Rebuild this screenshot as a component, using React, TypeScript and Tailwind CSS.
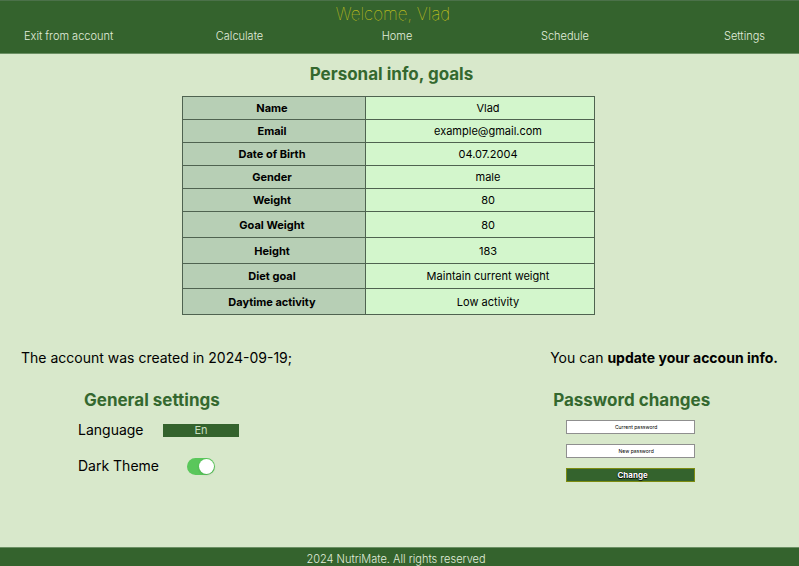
import { useState } from "react";

const navItems = ["Exit from account", "Calculate", "Home", "Schedule", "Settings"];

const profileRows = [
  { label: "Name", value: "Vlad", height: "h-[23px]" },
  { label: "Email", value: "example@gmail.com", height: "h-[23px]" },
  { label: "Date of Birth", value: "04.07.2004", height: "h-[23px]" },
  { label: "Gender", value: "male", height: "h-[23px]" },
  { label: "Weight", value: "80", height: "h-[23px]" },
  { label: "Goal Weight", value: "80", height: "h-[26px]" },
  { label: "Height", value: "183", height: "h-[26px]" },
  { label: "Diet goal", value: "Maintain current weight", height: "h-[25px]" },
  { label: "Daytime activity", value: "Low activity", height: "h-[26px]" },
];

function Header() {
  return (
    <header className="h-[54px] border-y border-t-[#4b7149] border-b-[#6b9064] bg-[#34632d]">
      <p className="pt-px pr-[13px] text-center text-[17px] leading-6 font-thin text-[#e0dc18]">
        Welcome, Vlad
      </p>
      <nav className="grid grid-cols-[137fr_157fr_158fr_178fr_111fr] pr-[34px] pl-6 text-center text-[11px] leading-5 font-light text-[#e2eedd]">
        {navItems.map((item) => (
          <a key={item} href="#" className="first:text-left last:text-right">
            {item}
          </a>
        ))}
      </nav>
    </header>
  );
}

function ProfileTable() {
  return (
    <table className="mx-auto w-[413px] table-fixed border-collapse bg-[#d3f6cc] text-[11px] leading-4 text-black">
      <tbody>
        {profileRows.map((row) => (
          <tr key={row.label} className={row.height}>
            <th
              scope="row"
              className="w-[183px] border border-[#4f6350] bg-[#b7cfb5] p-0 pr-1 text-center font-bold"
            >
              {row.label}
            </th>
            <td className="border border-[#4f6350] p-0 pl-4 text-center">{row.value}</td>
          </tr>
        ))}
      </tbody>
    </table>
  );
}

function GeneralSettings() {
  const [dark, setDark] = useState(true);
  return (
    <section className="pl-[57px]">
      <h2 className="pl-[6px] text-[17px] leading-6 font-bold text-[#34682f]">General settings</h2>
      <div className="mt-2 grid grid-cols-[85px_76px] items-center gap-y-4 text-[14px] leading-5">
        <label htmlFor="language">Language</label>
        <select
          id="language"
          className="h-[13px] w-full appearance-none bg-[#34632d] text-center text-[11px] leading-3 text-[#c9dfc0] [text-align-last:center]"
        >
          <option>En</option>
        </select>
        <label htmlFor="dark" className="whitespace-nowrap">
          Dark Theme
        </label>
        <input
          id="dark"
          type="checkbox"
          checked={dark}
          onChange={(e) => setDark(e.target.checked)}
          className="flex h-[17px] w-7 appearance-none items-center justify-self-center rounded-full bg-gray-400 p-px before:size-[15px] before:rounded-full before:bg-white before:shadow checked:justify-end checked:bg-[#5ac75b]"
        />
      </div>
    </section>
  );
}

function PasswordChanges() {
  return (
    <section className="pl-[3px]">
      <h2 className="text-[17px] leading-6 font-bold text-[#34682f]">Password changes</h2>
      <form className="mt-2 ml-[13px] flex w-[129px] flex-col gap-[10px]">
        <input
          type="password"
          aria-label="Current password"
          placeholder="Current password"
          className="h-[14px] border border-[#8f8f8f] bg-white pl-[11px] text-center text-[5px] placeholder:text-black"
        />
        <input
          type="password"
          aria-label="New password"
          placeholder="New password"
          className="h-[14px] border border-[#8f8f8f] bg-white pl-[11px] text-center text-[5px] placeholder:text-black"
        />
        <button
          type="button"
          className="h-[14px] border border-[#7c8c10] bg-[#34632d] pl-1 text-[8px] leading-3 font-bold text-white [text-shadow:0_1px_1px_#000,0_0_1px_#000]"
        >
          Change
        </button>
      </form>
    </section>
  );
}

export default function App() {
  return (
    <div className="flex min-h-screen flex-col bg-[#d8e8cb] font-['Inter',sans-serif] text-black">
      <Header />
      <main className="flex-1">
        <div className="pt-2 pr-[22px]">
          <h1 className="mb-[10px] pl-[6px] text-center text-[17px] leading-6 font-bold text-[#34682f]">
            Personal info, goals
          </h1>
          <ProfileTable />
        </div>
        <div className="mt-[33px] flex justify-between px-[21px] text-[14px] leading-5">
          <div>
            <p className="mb-5">The account was created in 2024-09-19;</p>
            <GeneralSettings />
          </div>
          <div>
            <p className="mb-5">
              You can <a href="#" className="font-bold">update your accoun info.</a>
            </p>
            <PasswordChanges />
          </div>
        </div>
      </main>
      <footer className="border-t border-[#6b9064] bg-[#34632d] pt-1 pr-[7px] text-center text-[11px] leading-[14px] font-light text-[#e2eedd]">
        2024 NutriMate. All rights reserved
      </footer>
    </div>
  );
}
